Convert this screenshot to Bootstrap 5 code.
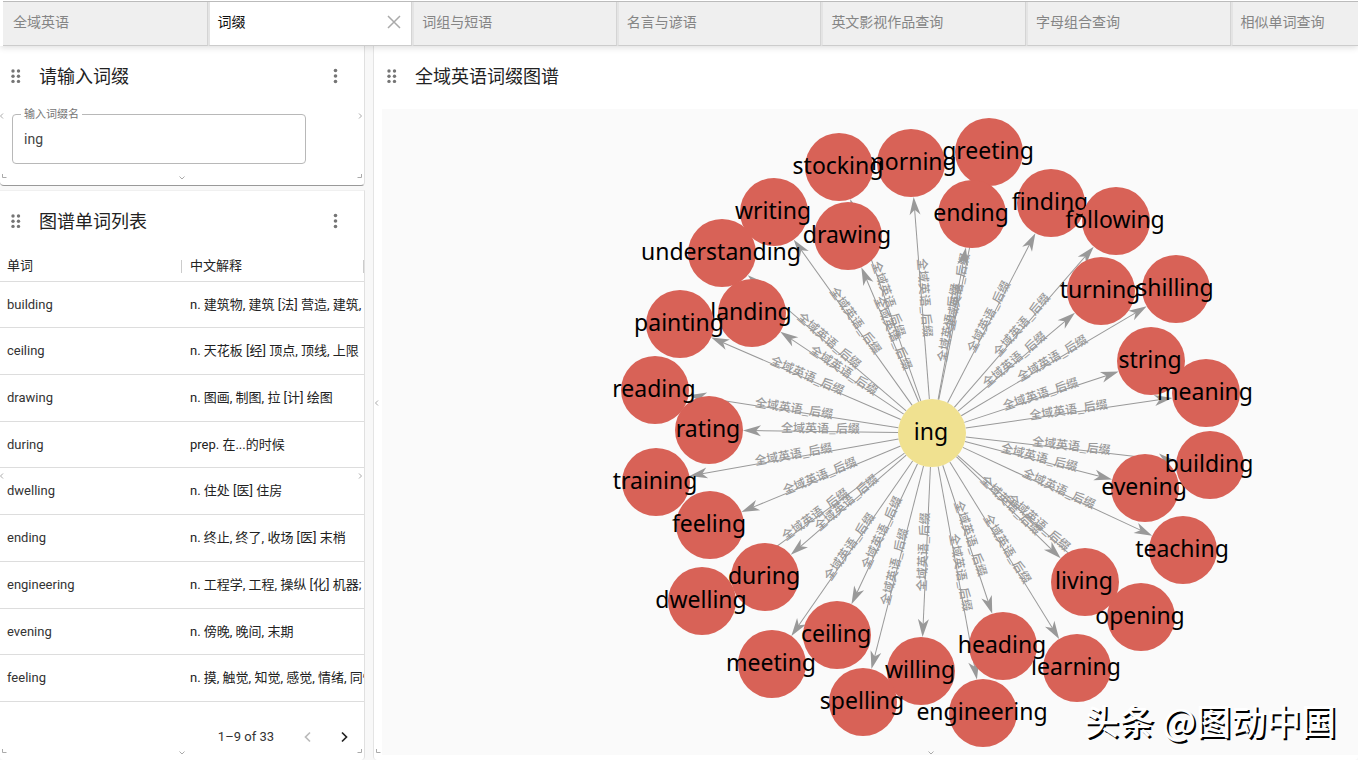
<!DOCTYPE html>
<html lang="zh-CN">
<head>
<meta charset="utf-8">
<meta name="viewport" content="width=device-width, initial-scale=1">
<title>全域英语 - 词缀</title>
<link href="https://cdn.jsdelivr.net/npm/bootstrap@5.3.0/dist/css/bootstrap.min.css" rel="stylesheet">
<style>
  body { font-family: Roboto, "Noto Sans CJK SC", sans-serif; font-size: 13px; color: #333; background: #f8f8f8; }
  .tabbar { height: 46px; padding: 1px 0 0 3px; background: #fff; box-shadow: 0 2px 6px rgba(0,0,0,.12); z-index: 2; }
  .tabbar-inner { border-top: 1px solid #bbb; }
  .tab-item { flex: 0 0 15.1%; border: 0; border-right: 1px solid #d4d4d4; border-bottom: 1px solid #ccc; background: #efefef; color: #858585; font-size: 14px; line-height: 20px; padding: 0 10px 4px; text-align: left; }
  .tab-item.active { background: #fff; color: #111; }
  .tab-item + .tab-item { border-left: 2px solid #e4e4e4; padding-left: 8px; }
  .side { flex: 0 0 365px; gap: 4px; }
  .panel { background: #fff; border-right: 1px solid #e0e0e0; border-radius: 0 0 4px 4px; }
  .panel-short { border-bottom: 1px solid #999; }
  .panel-list { border-top: 1px solid #f0f0f0; }
  .panel-graph { border-left: 1px solid #e4e4e4; }
  .panel-head { height: 60px; padding: 0 22px 0 10px; gap: 17px; }
  .panel-head h2 { font-size: 18px; line-height: 24px; padding-top: 2px; font-weight: 400; color: #222; }
  .dots { fill: #757575; }
  .field { margin: 8px 58px 21px 12px; }
  .field label { left: 9px; top: -8px; padding: 0 3px; background: #fff; font-size: 11px; line-height: 18px; color: #757575; }
  .field input { height: 50px; width: 100%; border: 1px solid #b8b8b8; border-radius: 4px; padding: 0 11px; font-size: 14px; color: #444; }
  .words { table-layout: fixed; width: 100%; height: 451px; }
  .words th { height: 30px; font-weight: 400; color: #222; position: relative; }
  .words th::after { content: ""; position: absolute; right: 0; top: 9px; height: 13px; border-right: 1px solid #ccc; }
  .words th, .words td { padding: 0 0 0 7px; border-bottom: 1px solid #ddd; white-space: nowrap; overflow: hidden; }
  .words th + th, .words td + td { padding-left: 8px; color: #222; }
  .pager { padding: 12px 2px 0 0; height: 57px; }
  .pager button { width: 36px; height: 36px; }
  .graph-area { background: #fafafa; margin: 3px 0 5px 8px; min-height: 0; }
  .graph-area svg { width: 100%; height: 100%; }
  .edge { stroke: #999; stroke-width: 1; }
  .head { fill: #999; }
  .edge-text { font: 500 12px "Noto Sans CJK SC", sans-serif; fill: #999; text-anchor: middle; }
  .node { fill: #d86257; }
  .node-root { fill: #f0e190; }
  .node-text { font: 23px "Noto Sans", "Noto Sans CJK SC", sans-serif; fill: #000; text-anchor: middle; }
  .watermark { right: 22px; bottom: 10px; font: 500 35px/50px "Noto Sans CJK SC", sans-serif; color: #fff; text-shadow: 2px 2px 0 #000; white-space: nowrap; }
  .grip { position: absolute; fill: none; stroke: #aaa; pointer-events: none; }
  .grip-l { left: -2px; top: 50%; margin-top: -4px; }
  .grip-r { right: 0; top: 50%; margin-top: -4px; }
  .grip-b { left: 50%; bottom: 3px; margin-left: -4px; }
  .grip-bl { left: 1px; bottom: 6px; }
  .grip-br { right: 1px; bottom: 6px; }
  .panel-graph .grip-l { left: -1px; }
  .panel-graph .grip-b { left: 57%; margin-left: -8px; }
</style>
</head>
<body class="vh-100 overflow-hidden d-flex flex-column">

<svg class="d-none">
  <symbol id="drag" viewBox="0 0 12 18"><circle cx="3" cy="4" r="1.7"/><circle cx="8.500" cy="4" r="1.7"/><circle cx="3" cy="9.200" r="1.700"/><circle cx="8.500" cy="9.200" r="1.700"/><circle cx="3" cy="14.400" r="1.700"/><circle cx="8.500" cy="14.400" r="1.700"/></symbol>
  <symbol id="more" viewBox="0 0 12 18"><circle cx="5.500" cy="3.500" r="1.800"/><circle cx="5.500" cy="9" r="1.800"/><circle cx="5.500" cy="14.500" r="1.800"/></symbol>
  <symbol id="left" viewBox="0 0 8 8"><path d="M5 1.500 2.500 4 5 6.500"/></symbol>
  <symbol id="right" viewBox="0 0 8 8"><path d="M3 1.500 5.500 4 3 6.500"/></symbol>
  <symbol id="down" viewBox="0 0 8 8"><path d="M1.500 2.500 4 5 6.500 2.500"/></symbol>
  <symbol id="cbl" viewBox="0 0 6 6"><path d="M1.500 1v3.500h4"/></symbol>
  <symbol id="cbr" viewBox="0 0 6 6"><path d="M4.500 1v3.500h-4"/></symbol>
</svg>

<header class="tabbar flex-shrink-0 position-relative">
  <nav class="tabbar-inner d-flex h-100 overflow-hidden">
    <button class="tab-item">全域英语</button>
    <button class="tab-item active d-flex align-items-center justify-content-between">词缀
      <svg width="14" height="14" viewBox="0 0 14 14" fill="none" stroke="#aaa" stroke-width="1.500" aria-label="关闭"><path d="M1 1l12 12M13 1 1 13"/></svg></button>
    <button class="tab-item">词组与短语</button>
    <button class="tab-item">名言与谚语</button>
    <button class="tab-item">英文影视作品查询</button>
    <button class="tab-item">字母组合查询</button>
    <button class="tab-item">相似单词查询</button>
  </nav>
</header>

<main class="d-flex flex-grow-1" style="min-height:0">
  <div class="side d-flex flex-column">
    <section class="panel panel-short position-relative">
      <div class="panel-head d-flex align-items-center">
        <svg class="dots" width="12" height="18"><use href="#drag"/></svg>
        <h2 class="m-0 flex-grow-1">请输入词缀</h2>
        <button class="btn p-0 border-0 d-flex" aria-label="更多"><svg class="dots" width="12" height="18"><use href="#more"/></svg></button>
      </div>
      <div class="field position-relative">
        <label for="affix" class="position-absolute">输入词缀名</label>
        <input id="affix" class="d-block" type="text" value="ing">
      </div>
      <svg class="grip grip-l" width="8" height="8"><use href="#left"/></svg>
      <svg class="grip grip-r" width="8" height="8"><use href="#right"/></svg>
      <svg class="grip grip-b" width="8" height="8"><use href="#down"/></svg>
      <svg class="grip grip-bl" width="6" height="6"><use href="#cbl"/></svg>
      <svg class="grip grip-br" width="6" height="6"><use href="#cbr"/></svg>
    </section>

    <section class="panel panel-list position-relative flex-grow-1">
      <div class="panel-head d-flex align-items-center">
        <svg class="dots" width="12" height="18"><use href="#drag"/></svg>
        <h2 class="m-0 flex-grow-1">图谱单词列表</h2>
        <button class="btn p-0 border-0 d-flex" aria-label="更多"><svg class="dots" width="12" height="18"><use href="#more"/></svg></button>
      </div>
      <table class="words">
        <thead><tr><th>单词</th><th>中文解释</th></tr></thead>
        <tbody>
          <tr><td>building</td><td>n. 建筑物, 建筑 [法] 营造, 建筑, 建筑业</td></tr>
          <tr><td>ceiling</td><td>n. 天花板 [经] 顶点, 顶线, 上限</td></tr>
          <tr><td>drawing</td><td>n. 图画, 制图, 拉 [计] 绘图</td></tr>
          <tr><td>during</td><td>prep. 在...的时候</td></tr>
          <tr><td>dwelling</td><td>n. 住处 [医] 住房</td></tr>
          <tr><td>ending</td><td>n. 终止, 终了, 收场 [医] 末梢</td></tr>
          <tr><td>engineering</td><td>n. 工程学, 工程, 操纵 [化] 机器; 机械</td></tr>
          <tr><td>evening</td><td>n. 傍晚, 晚间, 末期</td></tr>
          <tr><td>feeling</td><td>n. 摸, 触觉, 知觉, 感觉, 情绪, 同情</td></tr>
        </tbody>
      </table>
      <div class="pager d-flex align-items-center justify-content-end">
        <span class="me-3">1–9 of 33</span>
        <button class="btn p-0 border-0 d-flex align-items-center justify-content-center" aria-label="上一页"><svg width="12" height="12" viewBox="0 0 12 12" fill="none" stroke="#bbb" stroke-width="1.700"><path d="M8 1.500 3.500 6 8 10.500"/></svg></button>
        <button class="btn p-0 border-0 d-flex align-items-center justify-content-center" aria-label="下一页"><svg width="12" height="12" viewBox="0 0 12 12" fill="none" stroke="#222" stroke-width="1.700"><path d="M4 1.500 8.500 6 4 10.500"/></svg></button>
      </div>
      <svg class="grip grip-l" width="8" height="8"><use href="#left"/></svg>
      <svg class="grip grip-r" width="8" height="8"><use href="#right"/></svg>
      <svg class="grip grip-b" width="8" height="8"><use href="#down"/></svg>
      <svg class="grip grip-bl" width="6" height="6"><use href="#cbl"/></svg>
      <svg class="grip grip-br" width="6" height="6"><use href="#cbr"/></svg>
    </section>
  </div>

  <section class="panel panel-graph position-relative flex-grow-1 d-flex flex-column ms-2 border-end-0">
    <div class="panel-head d-flex align-items-center flex-shrink-0 ps-2 ms-1">
      <svg class="dots" width="12" height="18"><use href="#drag"/></svg>
      <h2 class="m-0">全域英语词缀图谱</h2>
    </div>
    <div class="graph-area position-relative flex-grow-1">
      <svg id="graph" class="d-block" viewBox="382 109 976 646" role="img" aria-label="ing 词缀图谱"></svg>
      <div class="watermark position-absolute">头条 @图动中国</div>
    </div>
    <svg class="grip grip-l" width="8" height="8"><use href="#left"/></svg>
    <svg class="grip grip-b" width="8" height="8"><use href="#down"/></svg>
    <svg class="grip grip-bl" width="6" height="6"><use href="#cbl"/></svg>
  </section>
</main>

<script src="https://cdn.jsdelivr.net/npm/bootstrap@5.3.0/dist/js/bootstrap.bundle.min.js"></script>
<script>
  // Words in paint order: later nodes cover earlier ones.
  const root = ['ing', 932, 433];
  const words = [
    ['morning', 911, 163], ['stocking', 839, 167], ['greeting', 989, 152], ['ending', 972, 214],
    ['drawing', 848, 236], ['writing', 774, 212], ['understanding', 722, 253], ['landing', 752, 313],
    ['painting', 680, 324], ['rating', 709, 430], ['reading', 655, 390], ['feeling', 710, 525],
    ['training', 656, 482], ['during', 765, 577], ['dwelling', 702, 601], ['ceiling', 837, 635],
    ['meeting', 772, 664], ['willing', 921, 671], ['spelling', 863, 702], ['engineering', 983, 713],
    ['learning', 1077, 668], ['heading', 1003, 646], ['living', 1085, 582], ['opening', 1141, 617],
    ['teaching', 1183, 550], ['evening', 1145, 488], ['building', 1210, 465], ['string', 1151, 361],
    ['meaning', 1206, 393], ['shilling', 1176, 289], ['turning', 1101, 291], ['finding', 1051, 203],
    ['following', 1116, 221]
  ];
  const R = 34;
  let edges = '', nodes = '';
  for (const [, x, y] of words) {
    const dx = x - root[1], dy = y - root[2], len = Math.hypot(dx, dy);
    const deg = Math.atan2(dy, dx) * 180 / Math.PI;
    const upright = deg > 90 ? deg - 180 : deg < -90 ? deg + 180 : deg;
    edges += `<g transform="translate(${root[1]} ${root[2]}) rotate(${deg})">
      <line class="edge" x1="${R}" y1="0" x2="${len - R - 10}" y2="0"/>
      <path class="head" transform="translate(${len - R} 0)" d="M0 0-18-5.500-13 0-18 5.500Z"/></g>
      <text class="edge-text" transform="translate(${root[1] + dx / 2} ${root[2] + dy / 2}) rotate(${upright})" y="1">全域英语_后缀</text>`;
  }
  for (const [word, x, y] of [root, ...words]) {
    nodes += `<circle class="${word === 'ing' ? 'node-root' : 'node'}" cx="${x}" cy="${y}" r="${R}"/>
      <text class="node-text" x="${x - 1}" y="${y + 7}">${word}</text>`;
  }
  document.getElementById('graph').innerHTML = edges + nodes;
</script>
</body>
</html>
